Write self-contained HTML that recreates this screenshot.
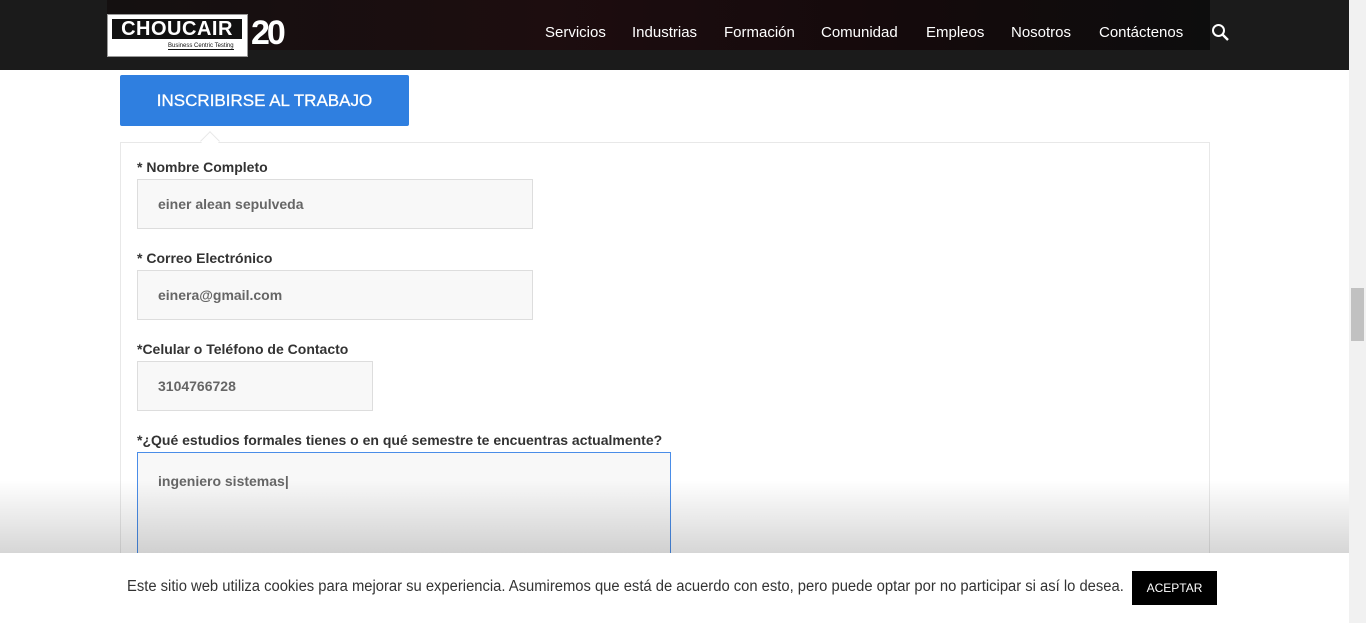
<!DOCTYPE html>
<html><head><meta charset="utf-8"><style>
*{box-sizing:border-box;margin:0;padding:0}
html,body{width:1366px;height:623px;overflow:hidden}
body{background:#fff;font-family:"Liberation Sans",sans-serif;position:relative}
.hdr{position:absolute;left:0;top:0;width:1349px;height:70px;background:#1b1b1b}
.hero{position:absolute;left:107px;top:0;width:1103px;height:50px;background:linear-gradient(90deg,#141010,#1d0d0f 40%,#150a0c 70%,#0d0d0d)}
.logo{position:absolute;left:107px;top:14px;width:141px;height:43px;background:#fff;border:1px solid #999}
.logo .in{position:absolute;left:4px;top:4px;width:130px;height:20px;background:#111;color:#fff;font-weight:bold;font-size:20px;line-height:20px;text-align:center;letter-spacing:.5px}
.logo .sub{position:absolute;left:60px;top:28px;font-size:6px;color:#111;border-bottom:1px solid #111}
.twenty{position:absolute;left:251px;top:14px;color:#fff;font-weight:bold;font-size:34px;letter-spacing:-3px;line-height:38px}
.nav{position:absolute;top:24px;font-size:15px;color:#fff}
.sb{position:absolute;left:1349px;top:0;width:17px;height:623px;background:#f1f1f1}
.thumb{position:absolute;left:1351px;top:288px;width:13px;height:53px;background:#c1c1c1}
.tab{position:absolute;left:120px;top:75px;width:289px;height:51px;background:#2f7fe0;border-radius:2px;color:#fff;font-size:17px;line-height:51px;text-align:center;-webkit-text-stroke:.3px #fff}
.box{position:absolute;left:120px;top:142px;width:1090px;height:470px;border:1px solid #e8e8e8}
.notch{position:absolute;left:203px;top:134px;width:14px;height:14px;background:#fff;border-left:1px solid #e8e8e8;border-top:1px solid #e8e8e8;transform:rotate(45deg)}
.lbl{position:absolute;left:137px;font-size:14px;font-weight:bold;color:#333}
.inp{position:absolute;left:137px;height:50px;background:#f8f8f8;border:1px solid #ddd;font-size:14px;font-weight:bold;color:#666;padding:16px 20px}
.shade{position:absolute;left:0;top:480px;width:1349px;height:73px;background:linear-gradient(rgba(0,0,0,0),rgba(0,0,0,.16))}
.cookie{position:absolute;left:0;top:553px;width:1349px;height:70px;background:#fff;font-size:15.5px;color:#333}
.ct{position:absolute;left:127px;top:25px;white-space:nowrap;transform:scaleX(.953);transform-origin:0 0}
.btn{position:absolute;left:1132px;top:18px;width:85px;height:34px;background:#000;color:#fff;font-size:12px;line-height:34px;text-align:center}
</style></head><body>
<div class="hdr"></div><div class="hero"></div>
<div class="logo"><div class="in">CHOUCAIR</div><div class="sub">Business Centric Testing</div></div>
<div class="twenty">20</div>
<div class="nav" style="left:545px">Servicios</div>
<div class="nav" style="left:632px">Industrias</div>
<div class="nav" style="left:724px">Formación</div>
<div class="nav" style="left:821px">Comunidad</div>
<div class="nav" style="left:926px">Empleos</div>
<div class="nav" style="left:1011px">Nosotros</div>
<div class="nav" style="left:1099px">Contáctenos</div>
<svg style="position:absolute;left:1211px;top:23px" width="20" height="20" viewBox="0 0 20 20"><circle cx="7.5" cy="7.5" r="5.5" fill="none" stroke="#fff" stroke-width="2"/><path d="M11.5 11.5L17 17" stroke="#fff" stroke-width="2.4"/></svg>
<div class="tab">INSCRIBIRSE AL TRABAJO</div>
<div class="box"></div><div class="notch"></div>
<div class="lbl" style="top:159px">* Nombre Completo</div>
<div class="inp" style="top:179px;width:396px">einer alean sepulveda</div>
<div class="lbl" style="top:250px">* Correo Electrónico</div>
<div class="inp" style="top:270px;width:396px">einera@gmail.com</div>
<div class="lbl" style="top:341px">*Celular o Teléfono de Contacto</div>
<div class="inp" style="top:361px;width:236px">3104766728</div>
<div class="lbl" style="top:432px">*¿Qué estudios formales tienes o en qué semestre te encuentras actualmente?</div>
<div class="inp" style="top:452px;width:534px;height:120px;border-color:#4a8de8;padding-top:20px">ingeniero sistemas|</div>
<div class="shade"></div>
<div class="cookie"><div class="ct">Este sitio web utiliza cookies para mejorar su experiencia. Asumiremos que está de acuerdo con esto, pero puede optar por no participar si así lo desea.</div><div class="btn">ACEPTAR</div></div>
<div class="sb"></div><div class="thumb"></div>
</body></html>
